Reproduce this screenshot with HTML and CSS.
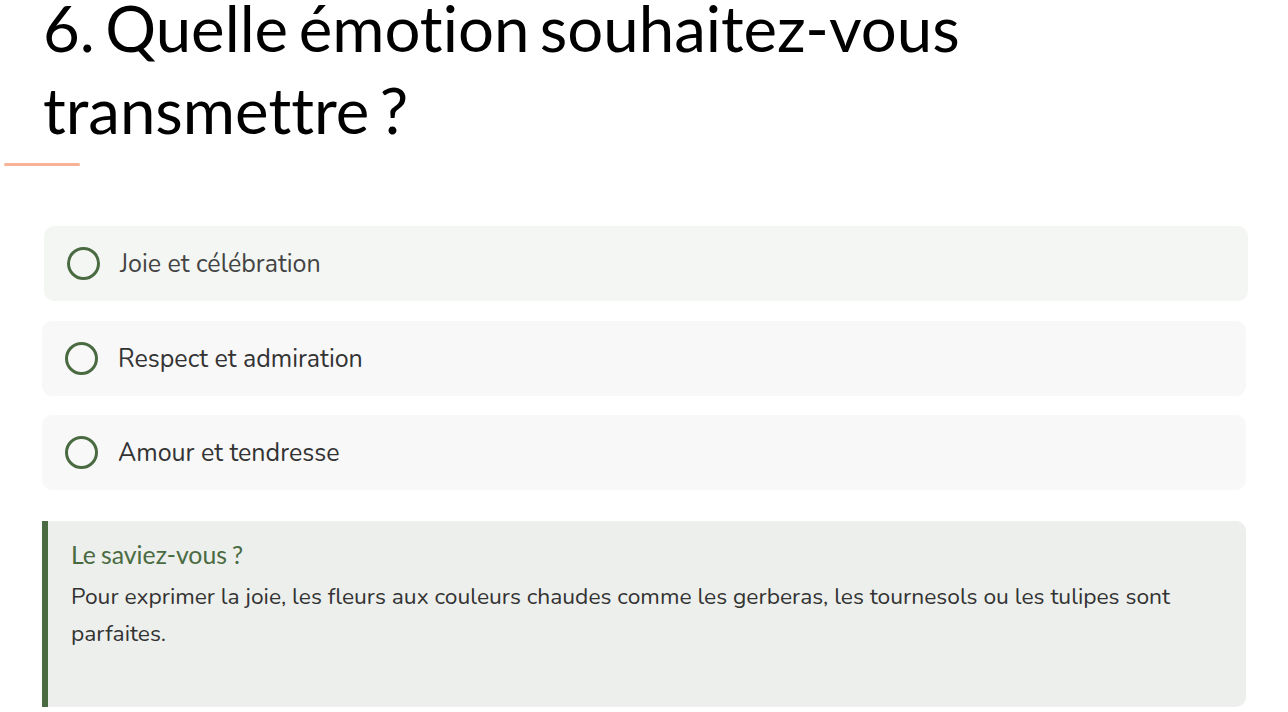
FILE: index.html
```html
<!DOCTYPE html>
<html lang="fr">
<head>
  <meta charset="UTF-8" />
  <meta name="viewport" content="width=device-width, initial-scale=1" />
  <title>Quiz - Question 6</title>
  <link rel="stylesheet" href="styles.css">
</head>
<body>

<main class="quiz">
  <h1 class="question-title">6. Quelle émotion souhaitez-vous transmettre&nbsp;?</h1>
  <div class="title-rule"></div>

  <div class="options">
    <label class="option option-hover">
      <input type="radio" name="emotion" value="joie" />
      <span class="option-text">Joie et célébration</span>
    </label>
    <label class="option">
      <input type="radio" name="emotion" value="respect" />
      <span class="option-text">Respect et admiration</span>
    </label>
    <label class="option">
      <input type="radio" name="emotion" value="amour" />
      <span class="option-text">Amour et tendresse</span>
    </label>
  </div>

  <aside class="tip">
    <h3>Le saviez-vous&nbsp;?</h3>
    <p>Pour exprimer la joie, les fleurs aux couleurs chaudes comme les gerberas, les tournesols ou les tulipes sont parfaites.</p>
  </aside>
</main>

</body>
</html>
```

FILE: styles.css
```css
body {
  margin: 0;
  padding: 0;
  background: white;
  font-family: Nunito, "Noto Sans", sans-serif;
  color: #333;
  overflow: hidden;
}
.quiz {
  padding: 0 42px;
}
.question-title {
  font-family: Lato, sans-serif;
  font-weight: 400;
  font-size: 63.5px;
  line-height: 82px;
  color: #000;
  font-variant-ligatures: none;
  word-spacing: -0.09em;
  margin: -13px 0 0 1px;
}
.title-rule {
  width: 76px;
  height: 3px;
  margin: 12px 0 0 -38px;
  background: #f7b298;
  border-radius: 2px;
}
.options {
  display: flex;
  flex-direction: column;
  gap: 19px;
  margin-top: 61px;
}
.option {
  display: flex;
  align-items: center;
  gap: 20px;
  height: 75px;
  padding: 0 23px;
  box-sizing: border-box;
  background: #f8f8f8;
  border-radius: 10px;
  cursor: pointer;
}
.option-hover {
  background: #f3f6f2;
  transform: translate(2px, -1px);
}
.option input[type=radio] {
  appearance: none;
  -webkit-appearance: none;
  margin: 0;
  width: 33px;
  height: 33px;
  flex-shrink: 0;
  border: 3px solid #4a6b42;
  border-radius: 50%;
  box-sizing: border-box;
}
.option-text {
  font-size: 25px;
  color: #333;
}
.option-hover .option-text {
  color: #444;
}
.tip {
  margin-top: 31px;
  background: #edefec;
  border-left: 6px solid #4a6b42;
  border-radius: 0 10px 10px 0;
  padding: 19px 23px 55px 23px;
}
.tip h3 {
  font-family: Lato, sans-serif;
  font-weight: 400;
  font-size: 24.8px;
  line-height: 1.2;
  color: #4a6b42;
  font-variant-ligatures: none;
  word-spacing: -0.05em;
  margin: 0 0 9px 0;
}
.tip p {
  margin: 0;
  font-size: 22.8px;
  line-height: 36.8px;
  color: #333;
}
```
